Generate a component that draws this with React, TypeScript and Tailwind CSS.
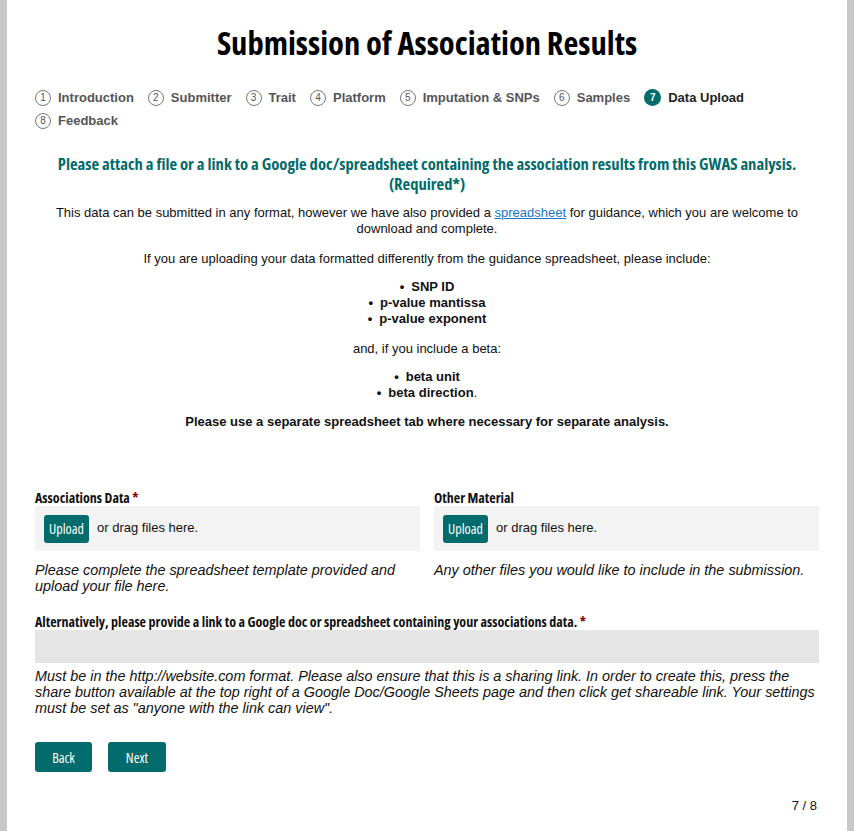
import React from "react";

const cond = "font-['Open_Sans',sans-serif] [font-stretch:75%]";
const arial = "font-['Liberation_Sans',Arial,sans-serif]";

const steps = [
  "Introduction",
  "Submitter",
  "Trait",
  "Platform",
  "Imputation & SNPs",
  "Samples",
  "Data Upload",
  "Feedback",
];

function Step({ n, label }: { n: number; label: string }) {
  const active = n === 7;
  return (
    <div className="flex items-center gap-[7px] mr-[14px] h-[23px]">
      {active ? (
        <span className="w-[17px] h-[17px] rounded-full bg-[#026b6b] text-white text-[10px] font-bold flex items-center justify-center">
          {n}
        </span>
      ) : (
        <span className="w-[16px] h-[16px] rounded-full border border-[#777] text-[#555] text-[10px] flex items-center justify-center">
          {n}
        </span>
      )}
      <span className={`text-[13px] font-bold ${active ? "text-[#222]" : "text-[#555]"}`}>{label}</span>
    </div>
  );
}

function Bullet({ children }: { children: React.ReactNode }) {
  return (
    <li>
      <span className="mr-[7px]">•</span>
      {children}
    </li>
  );
}

function UploadCol({ title, req, help }: { title: string; req?: boolean; help: React.ReactNode }) {
  return (
    <div className="flex-1 flex flex-col">
      <div className={`${cond} font-bold text-[14px] text-[#111] leading-[16px]`}>
        {title}
        {req && <span className="text-[#8b0000]"> *</span>}
      </div>
      <div className="bg-[#f3f3f3] h-[45px] flex items-center pl-[9px]">
        <button className={`${cond} bg-[#026b6b] text-white text-[14px] rounded-[3px] w-[45px] h-[28px]`}>Upload</button>
        <span className="ml-[8px] text-[13px] text-[#111] -mt-[2px]">or drag files here.</span>
      </div>
      <div className="italic text-[14.4px] leading-[16px] text-[#111] mt-[11px]">{help}</div>
    </div>
  );
}

export default function App() {
  return (
    <div className={`min-h-[831px] w-full bg-[#c8c8c8] px-[7px] ${arial}`}>
      <div className="bg-white min-h-[831px] px-[28px] flex flex-col">
        <h1 className={`${cond} font-bold text-[32.5px] text-black text-center mt-[21px] leading-[44px]`}>
          Submission of Association Results
        </h1>
        <div className="flex flex-wrap mt-[21px]">
          {steps.map((s, i) => (
            <Step key={s} n={i + 1} label={s} />
          ))}
        </div>
        <div className={`${cond} font-bold text-[16.6px] text-[#026b6b] text-center leading-[20px] mt-[22px]`}>
          Please attach a file or a link to a Google doc/spreadsheet containing the association results from this GWAS analysis.
          <br />
          (Required*)
        </div>
        <div className="text-[13px] leading-[16px] text-[#111] text-center mt-[11px]">
          <p>
            This data can be submitted in any format, however we have also provided a{" "}
            <a className="text-[#1a73c8] underline">spreadsheet</a> for guidance, which you are welcome to
            <br />
            download and complete.
          </p>
          <p className="mt-[14px]">If you are uploading your data formatted differently from the guidance spreadsheet, please include:</p>
          <ul className="mt-[12px] font-bold">
            <Bullet>SNP ID</Bullet>
            <Bullet>p-value mantissa</Bullet>
            <Bullet>p-value exponent</Bullet>
          </ul>
          <p className="mt-[14px]">and, if you include a beta:</p>
          <ul className="mt-[12px] font-bold">
            <Bullet>beta unit</Bullet>
            <Bullet>
              beta direction<span className="font-normal">.</span>
            </Bullet>
          </ul>
          <p className="mt-[13px] font-bold">Please use a separate spreadsheet tab where necessary for separate analysis.</p>
        </div>

        <div className="flex gap-[14px] mt-[60px]">
          <UploadCol
            title="Associations Data"
            req
            help={
              <>
                Please complete the spreadsheet template provided and
                <br />
                upload your file here.
              </>
            }
          />
          <UploadCol title="Other Material" help="Any other files you would like to include in the submission." />
        </div>

        <div className={`${cond} font-bold text-[14px] text-[#111] leading-[16px] mt-[20px]`}>
          Alternatively, please provide a link to a Google doc or spreadsheet containing your associations data.
          <span className="text-[#8b0000]"> *</span>
        </div>
        <div className="bg-[#e5e5e5] h-[33px]" />
        <div className="italic text-[14.4px] leading-[16px] text-[#111] mt-[5px]">
          Must be in the http://website.com format. Please also ensure that this is a sharing link. In order to create this, press the
          share button available at the top right of a Google Doc/Google Sheets page and then click get shareable link. Your settings
          must be set as "anyone with the link can view".
        </div>

        <div className="flex gap-[16px] mt-[26px]">
          <button className={`${cond} bg-[#026b6b] text-white text-[14px] rounded-[3px] w-[57px] h-[30px]`}>Back</button>
          <button className={`${cond} bg-[#026b6b] text-white text-[14px] rounded-[3px] w-[58px] h-[30px]`}>Next</button>
        </div>
        <div className="text-right text-[13px] leading-[16px] text-[#111] mt-[26px] pr-[2px]">7 / 8</div>
      </div>
    </div>
  );
}
